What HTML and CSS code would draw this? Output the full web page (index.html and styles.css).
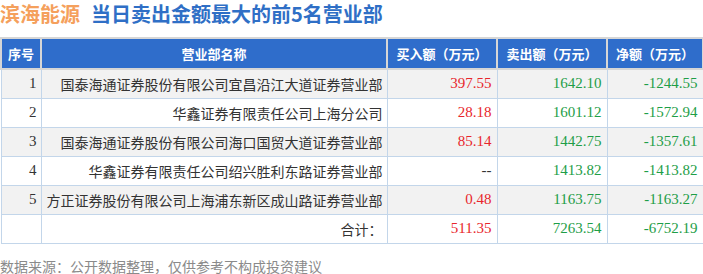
FILE: index.html
```html
<!DOCTYPE html>
<html lang="zh">
<head>
<meta charset="utf-8">
<title>滨海能源 当日卖出金额最大的前5名营业部</title>
<link rel="stylesheet" href="styles.css">
</head>
<body>
<div class="page">
  <h1 class="title"><span class="stock">滨海能源</span><span class="headline">当日卖出金额最大的前5名营业部</span></h1>
  <table class="grid">
    <colgroup>
      <col class="c-no"><col class="c-name"><col class="c-num"><col class="c-num"><col class="c-net">
    </colgroup>
    <thead>
      <tr><th>序号</th><th>营业部名称</th><th>买入额（万元）</th><th>卖出额（万元）</th><th>净额（万元）</th></tr>
    </thead>
    <tbody>
      <tr class="alt"><td class="no">1</td><td class="name">国泰海通证券股份有限公司宜昌沿江大道证券营业部</td><td class="num up">397.55</td><td class="num down">1642.10</td><td class="num down">-1244.55</td></tr>
      <tr><td class="no">2</td><td class="name">华鑫证券有限责任公司上海分公司</td><td class="num up">28.18</td><td class="num down">1601.12</td><td class="num down">-1572.94</td></tr>
      <tr class="alt"><td class="no">3</td><td class="name">国泰海通证券股份有限公司海口国贸大道证券营业部</td><td class="num up">85.14</td><td class="num down">1442.75</td><td class="num down">-1357.61</td></tr>
      <tr><td class="no">4</td><td class="name">华鑫证券有限责任公司绍兴胜利东路证券营业部</td><td class="num plain">--</td><td class="num down">1413.82</td><td class="num down">-1413.82</td></tr>
      <tr class="alt"><td class="no">5</td><td class="name">方正证券股份有限公司上海浦东新区成山路证券营业部</td><td class="num up">0.48</td><td class="num down">1163.75</td><td class="num down">-1163.27</td></tr>
      <tr><td class="no"></td><td class="name">合计：</td><td class="num up">511.35</td><td class="num down">7263.54</td><td class="num down">-6752.19</td></tr>
    </tbody>
  </table>
  <p class="source">数据来源：公开数据整理，仅供参考不构成投资建议</p>
</div>
</body>
</html>
```

FILE: styles.css
```css
* { box-sizing: border-box; }
html, body { margin: 0; padding: 0; background: #fff; }
body { font-family: "Noto Sans CJK SC", "Noto Sans", sans-serif; color: #333; }
.page { width: 703px; }

.title {
  margin: 0;
  height: 37px;
  padding-top: 1px;
  font-size: 20px;
  line-height: 26px;
  font-weight: 700;
  white-space: nowrap;
}
.stock { color: #f5a05c; }
.headline { color: #2f6fc6; margin-left: 11px; }

.grid {
  width: 702px;
  border-collapse: collapse;
  table-layout: fixed;
  border: 1px solid #c3d6ea;
}
.c-no { width: 40px; }
.c-name { width: 346px; }
.c-num { width: 110px; }
.c-net { width: 96px; }

.grid th {
  height: 31px;
  padding: 0;
  background: #2f6dcb;
  color: #fff;
  font-size: 13px;
  font-weight: 700;
  text-align: center;
  border: 2px solid #d6d6d6;
  white-space: nowrap;
}
.grid td {
  height: 29px;
  padding: 0 5px 0 0;
  border: 1px solid #c3d6ea;
  font-size: 14px;
  white-space: nowrap;
  text-align: right;
}
.grid tr.alt td { background: #f2f2f2; }
.grid td.no, .grid td.num {
  font-family: "Liberation Serif", "Times New Roman", serif;
  font-size: 15px;
}
.grid td.no { padding-right: 4px; }
.grid td.name { padding-right: 4px; }
.up { color: #e8262c; }
.down { color: #1e9e47; }
.plain { color: #333; }

.source {
  margin: 12px 0 0;
  font-size: 14px;
  line-height: 20px;
  color: #8a8a8a;
}
```
